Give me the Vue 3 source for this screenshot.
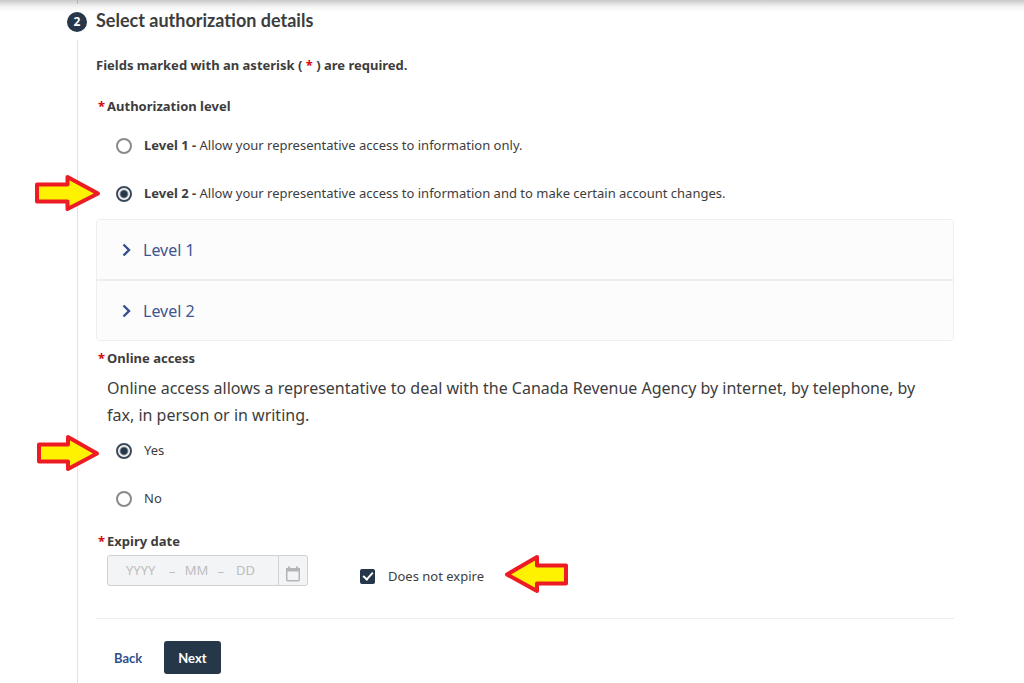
<template>
  <main class="page">
    <div class="rail">
      <span class="rail-start"></span>
      <span class="step-number">2</span>
      <span class="rail-line"></span>
    </div>

    <form class="step" @submit.prevent>
      <h2 class="step-title">Select authorization details</h2>
      <p class="required-note">Fields marked with an asterisk ( <span class="star">*</span> ) are required.</p>

      <fieldset class="group">
        <legend class="group-title"><span class="star">*</span>Authorization level</legend>
        <div class="options">
          <label v-for="option in levels" :key="option.value" class="option">
            <input v-model="level" type="radio" name="level" :value="option.value" class="radio" />
            <span class="option-text"><strong>{{ option.name }} - </strong>{{ option.text }}</span>
            <svg v-if="option.value === 2" class="arrow arrow-level" viewBox="0 0 68 40" aria-hidden="true">
              <path d="M4 11.5H34.500V4L65 20.500L34.500 36V28.500H4Z" />
            </svg>
          </label>
        </div>
      </fieldset>

      <div class="accordion">
        <button v-for="option in levels" :key="option.value" type="button" class="accordion-item">
          <svg class="chevron" viewBox="0 0 10 14" aria-hidden="true">
            <path d="M2.500 1.500L8 7L2.500 12.500" />
          </svg>
          {{ option.name }}
        </button>
      </div>

      <fieldset class="group">
        <legend class="group-title"><span class="star">*</span>Online access</legend>
        <p class="description">
          Online access allows a representative to deal with the Canada Revenue Agency by internet, by telephone, by fax, in person or in writing.
        </p>
        <div class="options access-options">
          <label v-for="answer in answers" :key="answer" class="option">
            <input v-model="onlineAccess" type="radio" name="access" :value="answer" class="radio" />
            <span class="option-text">{{ answer }}</span>
            <svg v-if="answer === 'Yes'" class="arrow arrow-access" viewBox="0 0 68 40" aria-hidden="true">
              <path d="M6 11.5H35V4L64 20.500L35 36V28.500H6Z" />
            </svg>
          </label>
        </div>
      </fieldset>

      <fieldset class="group">
        <legend class="group-title"><span class="star">*</span>Expiry date</legend>
        <div class="expiry-row">
          <div class="date-box">
            <input class="year" type="text" placeholder="YYYY" aria-label="Year" :disabled="noExpiry" />
            <span>–</span>
            <input class="month" type="text" placeholder="MM" aria-label="Month" :disabled="noExpiry" />
            <span>–</span>
            <input class="day" type="text" placeholder="DD" aria-label="Day" :disabled="noExpiry" />
            <button type="button" class="calendar" aria-label="Choose a date" :disabled="noExpiry">
              <svg viewBox="0 0 16 16" aria-hidden="true">
                <path class="calendar-top" d="M1 2H15V5.500H1ZM3 0.500H5V3H3ZM11 0.500H13V3H11Z" />
                <rect x="1.750" y="2.750" width="12.500" height="12" rx="1" />
              </svg>
            </button>
          </div>
          <label class="check-option">
            <input v-model="noExpiry" type="checkbox" class="checkbox" />
            <span>Does not expire</span>
            <svg class="arrow arrow-expire" viewBox="0 0 68 40" aria-hidden="true">
              <path d="M63 11.5H34V3L4 20.500L34 37V29.500H63Z" />
            </svg>
          </label>
        </div>
      </fieldset>

      <div class="actions">
        <button type="button" class="back">Back</button>
        <button type="submit" class="next">Next</button>
      </div>
    </form>
  </main>
</template>

<script setup>
import { ref } from 'vue';

const levels = [
  { value: 1, name: 'Level 1', text: 'Allow your representative access to information only.' },
  { value: 2, name: 'Level 2', text: 'Allow your representative access to information and to make certain account changes.' }
];
const answers = ['Yes', 'No'];

const level = ref(2);
const onlineAccess = ref('Yes');
const noExpiry = ref(true);
</script>

<style>
body {
  margin: 0;
  background: #fff;
}
</style>

<style scoped>
.page {
  box-sizing: border-box;
  display: flex;
  gap: 9px;
  min-height: 100vh;
  padding: 0 70px 0 67px;
  background: linear-gradient(#c8c8c8, #f0f0f0 6px, #fff 12px);
  color: #3d3d3d;
  font-family: "Noto Sans", sans-serif;
  font-size: 13px;
  line-height: 20px;
}

.rail {
  display: flex;
  flex-direction: column;
  align-items: center;
  width: 20px;
  flex-shrink: 0;
}

.rail-start,
.rail-line {
  width: 1px;
  background: #e2e2e2;
}

.rail-start {
  height: 4px;
  background: #b8b8b8;
}

.rail-line {
  flex: 1;
}

.step-number {
  width: 20px;
  height: 20px;
  margin: 8px 0;
  border-radius: 50%;
  background: #26374a;
  color: #fff;
  font-size: 12px;
  font-weight: 700;
  text-align: center;
}

.step {
  flex: 1;
  min-width: 0;
  padding-top: 8px;
}

.step-title {
  margin: 0;
  font-family: Lato, sans-serif;
  font-size: 18px;
  font-weight: 700;
  line-height: 24px;
}

.required-note {
  margin: 23px 0 21px;
  font-weight: 700;
}

.star {
  color: #d3080c;
}

.group {
  min-width: 0;
  margin: 0;
  padding: 0;
  border: 0;
}

.group-title {
  padding: 0 0 0 2px;
  font-weight: 700;
}

.group-title .star {
  margin-right: 2px;
}

.options {
  display: flex;
  flex-direction: column;
  gap: 24px;
  padding: 18px 0 13px 20px;
}

.option {
  position: relative;
  display: flex;
  align-items: center;
  gap: 12px;
  min-height: 24px;
}

.option-text {
  padding-bottom: 2px;
}

.radio {
  appearance: none;
  flex-shrink: 0;
  width: 16px;
  height: 16px;
  margin: 0;
  border: 2px solid #8a8a8a;
  border-radius: 50%;
  background: #fff;
}

.radio:checked {
  border-color: #3b4a5b;
  background: radial-gradient(#26374a 3px, #fff 5px);
}

.arrow {
  position: absolute;
  width: 68px;
  height: 40px;
  fill: #fff200;
  stroke: #ed1c24;
  stroke-width: 4;
  stroke-linejoin: round;
}

.arrow-level,
.arrow-access {
  left: -83px;
  top: -9px;
}

.arrow-access {
  top: -6px;
}

.accordion {
  border: 1px solid #eee;
  border-radius: 4px;
  overflow: hidden;
}

.accordion-item {
  display: flex;
  align-items: center;
  gap: 12px;
  width: 100%;
  height: 59px;
  padding: 0 24px;
  border: 0;
  background: #fcfcfc;
  color: #3f5590;
  font: 16px "Noto Sans", sans-serif;
  text-align: left;
}

.accordion-item + .accordion-item {
  height: 61px;
  border-top: 2px solid #ededed;
}

.chevron {
  width: 10px;
  height: 14px;
  fill: none;
  stroke: #33508c;
  stroke-width: 2.4;
}

.accordion + .group {
  margin-top: 7px;
}

.description {
  margin: 7px 20px 0 11px;
  font-size: 16px;
  line-height: 27px;
}

.access-options {
  padding-top: 10px;
  padding-bottom: 20px;
}

.expiry-row {
  display: flex;
  gap: 52px;
  padding: 4px 0 21px 11px;
}

.date-box {
  box-sizing: border-box;
  display: flex;
  align-items: center;
  width: 201px;
  height: 31px;
  border: 1px solid #cfd1d3;
  border-radius: 3px;
  background: #f2f4f6;
  color: #bdbdbd;
}

.date-box input {
  min-width: 0;
  padding: 0 0 2px;
  border: 0;
  background: none;
  font: 13px "Noto Sans", sans-serif;
}

.date-box input::placeholder {
  color: #bdbdbd;
}

.year {
  width: 43px;
  margin-left: 18px;
}

.month {
  width: 42px;
  text-align: center;
}

.day {
  flex: 1;
  margin-left: 12px;
}

.calendar {
  display: flex;
  align-items: flex-end;
  justify-content: center;
  width: 29px;
  height: 29px;
  padding: 0 0 3px;
  border: 0;
  border-left: 1px solid #cfd1d3;
  background: none;
}

.calendar svg {
  width: 16px;
  height: 16px;
  fill: none;
  stroke: #b5b5b5;
  stroke-width: 1.5;
}

.calendar .calendar-top {
  fill: #b5b5b5;
  stroke: none;
}

.check-option {
  position: relative;
  display: flex;
  align-items: center;
  gap: 13px;
  height: 42px;
}

.checkbox {
  appearance: none;
  width: 15px;
  height: 15px;
  margin: 0;
  border-radius: 2px;
  background: #26374a;
}

.checkbox:checked::before {
  content: "";
  display: block;
  width: 4px;
  height: 8px;
  margin: 1px 0 0 5px;
  border: solid #fff;
  border-width: 0 2px 2px 0;
  transform: rotate(42deg);
}

.arrow-expire {
  left: 143px;
  top: -1px;
}

.actions {
  display: flex;
  gap: 8px;
  padding: 22px 0 9px 4px;
  border-top: 1px solid #eee;
}

.actions button {
  height: 33px;
  padding: 0 14px;
  border: 0;
  border-radius: 3px;
  font: 700 13px Lato, sans-serif;
}

.actions .back {
  background: none;
  color: #33508c;
}

.actions .next {
  background: #26374a;
  color: #fff;
}
</style>
